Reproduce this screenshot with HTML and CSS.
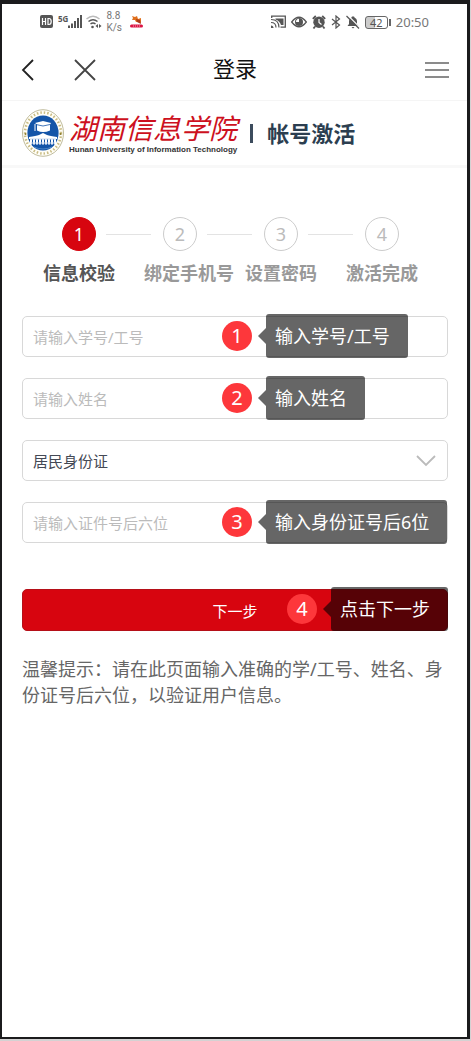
FILE: index.html
```html
<!DOCTYPE html>
<html lang="zh-CN">
  <head>
    <meta charset="utf-8">
    <meta name="viewport" content="width=device-width, initial-scale=1">
    <title>登录</title>
    <link rel="stylesheet" href="styles.css">
  </head>
  <body>
    <div class="phone">
      <div class="status">
        <div class="status-left">
          <svg width="14" height="14" viewBox="0 0 14 14">
            <rect x="0" y="0" width="13" height="13" rx="2" fill="#555" />
            <path d="M2.500 3v7M5.500 3v7M2.500 6.500h3M8 3.500v6h1q2.200 0 2.200-3t-2.200-3z" fill="none" stroke="#fff" stroke-width="1.200" />
          </svg>
          <div class="signal">
            <span class="signal-type">5G</span>
            <svg width="14" height="14" viewBox="0 0 14 14" fill="#555">
              <rect x="0" y="10.500" width="2" height="2.500" />
              <rect x="3" y="8.500" width="2" height="4.500" />
              <rect x="6" y="6" width="2" height="7" />
              <rect x="9" y="3" width="2" height="10" />
              <rect x="12" y="0" width="2" height="13" />
            </svg>
          </div>
          <svg class="wifi" width="16" height="14" viewBox="0 0 16 14" fill="none">
            <path d="M.5 4Q7 -1.500 13.500 4" stroke="#bbb" stroke-width="1.500" />
            <path d="M2.500 6.500Q7 3 11.500 6.500M4.500 9Q7 7 9.500 9" stroke="#555" stroke-width="1.500" />
            <circle cx="6.500" cy="12" r="1.300" fill="#555" />
            <path d="M12 9l-2.500 2L12 13zM13 9l2.500 2L13 13z" fill="#555" />
          </svg>
          <div class="speed">8.8<br>K/s</div>
          <svg class="app" width="14" height="14" viewBox="0 0 14 14">
            <path d="M2 1l3 1 2-1 1 3 3-1v5l-3-1-2 0-1-2-3 0 1-2z" fill="#e0701c" />
            <path d="M6 4l4 1 1 4-4-2z" fill="#a93b1b" />
            <rect x="0" y="9.500" width="13" height="3" rx="1.500" fill="#dc1444" />
            <path d="M3 11h7" stroke="#fff" stroke-width="1" stroke-dasharray="1 1" opacity=".6" />
          </svg>
        </div>
        <div class="status-right">
          <svg width="15" height="14" viewBox="0 0 15 14" fill="none" stroke="#555">
            <path d="M.7 3V1.200h13.600v11H9.500" stroke-width="1.300" />
            <path d="M0 4.500q8 0 8 8M0 7.500q5 0 5 5" stroke-width="1.200" />
            <path d="M0 10.500q2.500 0 2.500 2.500H0z" fill="#555" stroke="none" />
            <path d="M4.500 3.500h8V10H10Q8.500 5.500 4.500 4.500z" fill="#555" stroke="none" />
          </svg>
          <svg width="16" height="14" viewBox="0 0 16 14">
            <path d="M.7 7Q8-2.500 15.300 7 8 16.500.7 7z" fill="none" stroke="#555" stroke-width="1.300" />
            <circle cx="8" cy="7" r="4" fill="#555" />
            <path d="M8 3.800A3.200 3.200 0 0 0 5 7h3z" fill="#fff" />
          </svg>
          <svg width="14" height="14" viewBox="0 0 14 14">
            <path d="M.8 3.800L3.800 1M13.200 3.800L10.200 1M3 11.500L1.500 13.500M11 11.500l1.500 2" stroke="#555" stroke-width="1.800" />
            <circle cx="7" cy="7.300" r="5.700" fill="#555" />
            <path d="M7 4v3.500l2.500 2" fill="none" stroke="#fff" stroke-width="1.200" />
          </svg>
          <svg width="10" height="14" viewBox="0 0 10 14">
            <path d="M1 4l7.500 6L5 13V1l3.500 3L1 10" fill="none" stroke="#555" stroke-width="1.200" />
          </svg>
          <svg width="14" height="14" viewBox="0 0 14 14">
            <path d="M6 1.500h2l.5 1Q11 3.500 11 6v3l1.500 2h-11L3 9V6q0-2.500 2.500-3.500z" fill="#555" />
            <path d="M5.500 12h3L7 13.500z" fill="#555" />
            <path d="M1.500 0L14 12.500" stroke="#fff" stroke-width="1.200" />
            <path d="M.5 1L13 13.500" stroke="#555" stroke-width="1.300" />
          </svg>
          <div class="battery"><span>42</span></div>
          <div class="time">20:50</div>
        </div>
      </div>

      <header class="nav">
        <div class="nav-left">
          <button class="icon-button" type="button" aria-label="返回">
            <svg width="14" height="22" viewBox="0 0 14 22"><path d="M12 1L2 11l10 10" fill="none" stroke="#222" stroke-width="1.800" /></svg>
          </button>
          <button class="icon-button" type="button" aria-label="关闭">
            <svg width="22" height="22" viewBox="0 0 22 22"><path d="M1 1l20 20M21 1L1 21" stroke="#444" stroke-width="1.800" /></svg>
          </button>
        </div>
        <h1>登录</h1>
        <button class="icon-button menu" type="button" aria-label="菜单">
          <svg width="24" height="18" viewBox="0 0 24 18"><path d="M0 2h24M0 9h24M0 16h24" stroke="#666" stroke-width="1.600" /></svg>
        </button>
      </header>

      <div class="brand">
        <svg width="42" height="48" viewBox="0 0 42 48">
          <ellipse cx="21" cy="24" rx="20.500" ry="23.300" fill="#fffef8" stroke="#b8b391" stroke-width=".9" />
          <ellipse cx="21" cy="24" rx="18" ry="20.500" fill="none" stroke="#c9bc84" stroke-width="2.500" stroke-dasharray="1.500 2" />
          <ellipse cx="21" cy="24" rx="15.600" ry="17.600" fill="#1455a8" />
          <path d="M13 14l8-2 8 2-1 1.500v6q-7 3-13 0v-6z" fill="#fff" />
          <path d="M14 15.500l7 1.500 7-1.500" fill="none" stroke="#1455a8" stroke-width=".8" />
          <path d="M13 15v7" stroke="#fff" stroke-width="1" />
          <path d="M7 28q7-1 10-2l4-2 4 2q3 1 10 2v2H7z" fill="#fff" />
          <path d="M8 32h26" stroke="#fff" stroke-width="7" stroke-dasharray="2 1" />
          <path d="M8 30h26M9 34h24" stroke="#c9d9ee" stroke-width="1" />
          <path d="M12 38q9 4 18 0" fill="none" stroke="#4d86c7" stroke-width="1" />
          <circle cx="3.500" cy="25" r="1" fill="#8d7c2c" />
          <circle cx="38.500" cy="25" r="1" fill="#8d7c2c" />
        </svg>
        <div class="school">
          <div class="school-name">湖南信息学院</div>
          <div class="school-en">Hunan University of Information Technology</div>
        </div>
        <h2>帐号激活</h2>
      </div>

      <main>
        <ol class="steps">
          <li class="step active">
            <div class="marker"><span>1</span></div>
            <div class="step-name">信息校验</div>
          </li>
          <li class="step">
            <div class="marker"><span>2</span></div>
            <div class="step-name">绑定手机号</div>
          </li>
          <li class="step">
            <div class="marker"><span>3</span></div>
            <div class="step-name">设置密码</div>
          </li>
          <li class="step">
            <div class="marker"><span>4</span></div>
            <div class="step-name">激活完成</div>
          </li>
        </ol>

        <form>
          <div class="field">
            <input type="text" id="number" placeholder="请输入学号/工号">
            <label class="callout" for="number"><span class="badge">1</span><span class="tip">输入学号/工号</span></label>
          </div>
          <div class="field">
            <input type="text" id="name" placeholder="请输入姓名">
            <label class="callout" for="name"><span class="badge">2</span><span class="tip">输入姓名</span></label>
          </div>
          <div class="field">
            <select aria-label="证件类型">
              <option>居民身份证</option>
            </select>
            <svg class="chevron" width="20" height="12" viewBox="0 0 20 12"><path d="M1 1l9 9 9-9" fill="none" stroke="#bbb" stroke-width="1.800" /></svg>
          </div>
          <div class="field">
            <input type="text" id="idcard" placeholder="请输入证件号后六位">
            <label class="callout" for="idcard"><span class="badge">3</span><span class="tip">输入身份证号后6位</span></label>
          </div>
          <div class="field submit">
            <button class="next" type="button">下一步</button>
            <div class="callout"><span class="badge">4</span><span class="tip">点击下一步</span></div>
          </div>
        </form>

        <p class="hint">温馨提示：请在此页面输入准确的学/工号、姓名、身份证号后六位，以验证用户信息。</p>
      </main>
    </div>
  </body>
</html>
```
FILE: styles.css
```css
* {
  box-sizing: border-box;
}

body {
  margin: 0;
  padding: 0 1px 2px 0;
  background-color: #d4d2d3;
  font-family: "Noto Sans", "Noto Sans CJK SC", sans-serif;
}

.phone {
  min-height: calc(100vh - 2px);
  background-color: #fff;
  border: 2px solid #1b1b1d;
  border-top-width: 4px;
  border-right-width: 3px;
}

svg {
  display: block;
  flex: none;
}

h1,
h2,
p,
ol {
  margin: 0;
  padding: 0;
}

/* status bar */

.status {
  display: flex;
  justify-content: space-between;
  align-items: center;
  height: 36px;
  padding: 0 38px;
  color: #777;
}

.status-left,
.status-right {
  display: flex;
  align-items: center;
  gap: 5px;
}

.status-left {
  gap: 4px;
}

.signal {
  display: flex;
}

.signal-type {
  font-size: 8px;
  font-weight: bold;
  line-height: 8px;
  color: #555;
}

.speed {
  font-family: Roboto, sans-serif;
  font-size: 10px;
  line-height: 12px;
  margin-right: 4px;
}

.battery {
  position: relative;
  width: 23px;
  height: 13px;
  margin-right: 3px;
  border: 1px solid #666;
  border-radius: 3px;
  background: linear-gradient(to right, #ccc 42%, #fff 42%);
  font-size: 11px;
  line-height: 11px;
  text-align: center;
  color: #555;
}

.battery::after {
  content: "";
  position: absolute;
  top: 2px;
  right: -4px;
  width: 2px;
  height: 7px;
  background-color: #666;
}

.time {
  font-size: 13px;
}

/* title bar */

.nav {
  display: grid;
  grid-template-columns: 1fr auto 1fr;
  align-items: center;
  height: 60px;
  padding: 0 18px 0 19px;
}

.nav-left {
  display: flex;
  gap: 39px;
}

.icon-button {
  padding: 0;
  border: 0;
  background: none;
}

.menu {
  justify-self: end;
}

.nav h1 {
  font-size: 22px;
  font-weight: 400;
  line-height: 30px;
  margin-bottom: 4px;
  color: #111;
}

.brand {
  display: flex;
  align-items: center;
  height: 68px;
  padding: 0 20px;
  border-top: 1px solid #f5f5f5;
  border-bottom: 3px solid #f8f8f8;
}

.school {
  margin-left: 5px;
  white-space: nowrap;
}

.school-name {
  font-size: 28px;
  font-style: italic;
  font-weight: 400;
  line-height: 34px;
  color: #cd1020;
}

.school-en {
  font-family: "Liberation Sans", Arial, sans-serif;
  font-size: 8px;
  font-weight: bold;
  line-height: 10px;
  color: #333;
}

.brand h2 {
  display: flex;
  align-items: center;
  gap: 14px;
  margin-left: 13px;
  font-size: 22px;
  line-height: 30px;
  color: #2c3e50;
  white-space: nowrap;
}

.brand h2::before {
  content: "";
  width: 3px;
  height: 19px;
  background-color: #3c4c5d;
}

/* steps */

main {
  padding: 49px 19px 0 20px;
}

.steps {
  display: flex;
  padding: 0 9px 0 21px;
  list-style: none;
}

.step {
  flex: 1;
  min-width: 0;
  color: #999;
}

.step:last-child {
  flex: none;
  width: 93px;
}

.marker {
  display: flex;
  align-items: center;
  padding-left: 19px;
}

.marker span {
  flex: none;
  width: 34px;
  height: 34px;
  border: 1px solid #ccc;
  border-radius: 50%;
  font-size: 18px;
  line-height: 32px;
  text-align: center;
  color: #bbb;
}

.step:not(:last-child) .marker::after {
  content: "";
  flex: 1;
  height: 1px;
  margin: 0 -7px 0 10px;
  background-color: #e3e3e3;
}

.step-name {
  margin-top: 9px;
  font-size: 18px;
  font-weight: bold;
  line-height: 26px;
  white-space: nowrap;
}

.step.active {
  color: #555;
}

.active .marker span {
  border-color: #d7050f;
  background-color: #d7050f;
  color: #fff;
}

/* form */

form {
  display: flex;
  flex-direction: column;
  gap: 21px;
  margin-top: 30px;
}

.field {
  position: relative;
}

.field input,
.field select {
  display: block;
  width: 100%;
  height: 41px;
  padding: 0 10px;
  border: 1px solid #d8d8d8;
  border-radius: 5px;
  background-color: #fff;
  font-family: inherit;
  font-size: 15px;
  color: #444955;
  appearance: none;
}

.field input::placeholder {
  color: #bbb;
}

.chevron {
  position: absolute;
  top: 15px;
  right: 12px;
}

.submit {
  margin-top: 25px;
}

.next {
  display: block;
  width: 100%;
  height: 42px;
  border: 1px solid #b50f18;
  border-radius: 5px;
  background-color: #d7050f;
  font-family: inherit;
  font-size: 15px;
  color: #fff;
}

.callout {
  position: absolute;
  top: -2px;
  left: 200px;
  display: flex;
  align-items: center;
  gap: 14px;
  color: #fff;
  white-space: nowrap;
}

.submit .callout {
  left: 265px;
}

.badge {
  width: 30px;
  height: 30px;
  border-radius: 50%;
  background-color: #fd373b;
  font-size: 20px;
  line-height: 30px;
  text-align: center;
}

.tip {
  position: relative;
  height: 44px;
  padding: 0 18px 0 9px;
  border-radius: 3px;
  background-color: rgba(0, 0, 0, 0.6);
  font-size: 18px;
  line-height: 44px;
}

.tip::before {
  content: "";
  position: absolute;
  top: 14px;
  left: -8px;
  border: 8px solid transparent;
  border-left-width: 0;
  border-right-color: rgba(0, 0, 0, 0.6);
}

.hint {
  margin-top: 25px;
  font-size: 18px;
  line-height: 26px;
  color: #666;
}
```
